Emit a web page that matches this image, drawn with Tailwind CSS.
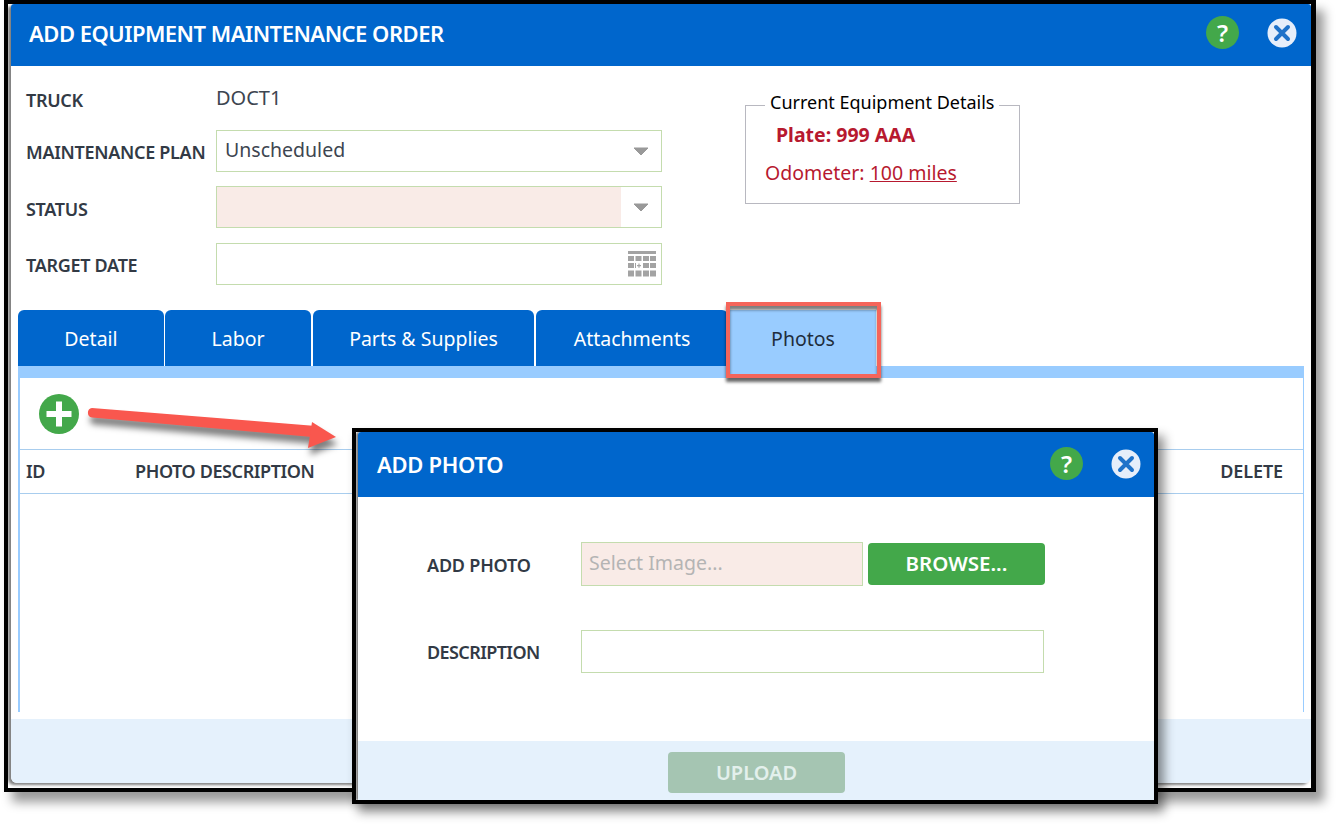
<!DOCTYPE html>
<html lang="en">
<head>
  <meta charset="UTF-8" />
  <title>Add Equipment Maintenance Order</title>
  <script src="https://cdn.jsdelivr.net/npm/@tailwindcss/browser@4"></script>
</head>
<body class="bg-white">
<div class="relative w-[1336px] h-[824px] overflow-hidden bg-white font-['Noto_Sans',sans-serif] text-[#323a45]">

  <!-- main window -->
  <div class="ml-[4px] w-[1312px] h-[792px] border-y-[4px] border-l-[4px] border-r-[5px] border-black bg-white shadow-[8px_10px_10px_rgba(0,0,0,0.4)]">
    <div class="ml-[3px] h-[779px] flex flex-col bg-white rounded-b-md rounded-t-[3px] shadow-[-3px_2px_3px_rgba(0,0,0,0.5)]">

      <header class="h-[62px] shrink-0 bg-[#0066cc] rounded-t-[3px] flex items-center justify-between pl-[18px] pr-[14px] text-white">
        <h1 class="text-[22px] font-semibold tracking-[-0.5px] pb-[3px]">ADD EQUIPMENT MAINTENANCE ORDER</h1>
        <div class="flex items-center gap-[28px] pb-[5px]">
          <span class="w-[33px] h-[33px] rounded-full bg-[#43a84a] flex items-center justify-center text-[24px] font-semibold">?</span>
          <svg width="30" height="30" viewBox="0 0 30 30"><circle cx="15" cy="15" r="14.5" fill="#e6eefa"/><path d="M9 9L21 21M21 9L9 21" stroke="#1f72c9" stroke-width="4" stroke-linecap="round"/></svg>
        </div>
      </header>

      <!-- order form -->
      <div class="h-[244px] shrink-0 flex pl-[15px]">
        <div class="w-[636px] shrink-0 text-[18px] font-semibold tracking-[-0.3px]">
          <div class="h-[64px] flex items-center pt-[4px]">
            <span class="w-[190px]">TRUCK</span>
            <span class="text-[20px] font-normal text-[#3d4550] tracking-normal pb-[5px]">DOCT1</span>
          </div>
          <div class="flex items-center h-[42px]">
            <span class="w-[190px] pt-[2px]">MAINTENANCE PLAN</span>
            <div class="w-[446px] h-full border border-[#c4dcae] flex items-center justify-between pl-[8px] pr-[12px]">
              <span class="text-[19.5px] font-normal tracking-normal text-[#3d4550] pb-[2px]">Unscheduled</span>
              <svg width="16" height="9" viewBox="0 0 16 9"><path d="M1 1H15L8 8Z" fill="#999" stroke="#999" stroke-linejoin="round"/></svg>
            </div>
          </div>
          <div class="flex items-center h-[42px] mt-[14px]">
            <span class="w-[190px] pt-[4px]">STATUS</span>
            <div class="w-[446px] h-full border border-[#c4dcae] flex items-center justify-between pr-[12px]">
              <div class="w-[404px] h-full bg-[#f9ebe7]"></div>
              <svg width="16" height="9" viewBox="0 0 16 9"><path d="M1 1H15L8 8Z" fill="#999" stroke="#999" stroke-linejoin="round"/></svg>
            </div>
          </div>
          <div class="flex items-center h-[42px] mt-[15px]">
            <span class="w-[190px] pt-[2px]">TARGET DATE</span>
            <div class="w-[446px] h-full border border-[#c4dcae] flex items-center justify-end pr-[5px]">
              <svg width="28" height="26" viewBox="0 0 28 26" fill="#a3a3a3">
                <rect x="0" y="0" width="28" height="3"/>
                <rect x="0" y="5" width="6" height="5"/><rect x="7.5" y="5" width="6" height="5"/><rect x="15" y="5" width="6" height="5"/><rect x="22" y="5" width="6" height="5"/>
                <rect x="0" y="12" width="6" height="5"/><rect x="22" y="12" width="6" height="5"/><rect x="15" y="12" width="6" height="5"/>
                <path d="M9 14H13V15.2H9ZM10.4 12.5H11.6V16.7H10.4Z"/><rect x="7" y="12" width="1" height="5"/>
                <rect x="0" y="19.5" width="6" height="6"/><rect x="7.5" y="19.5" width="6" height="6"/><rect x="15" y="19.5" width="6" height="6"/><rect x="22" y="19.5" width="6" height="6"/>
              </svg>
            </div>
          </div>
        </div>

        <fieldset class="ml-[83px] w-[275px] h-[112px] mt-[26px] border border-[#b8b8c0] pl-[19px] text-[#b7192f] text-[19.5px]">
          <legend class="px-[5px] pb-[6px] text-[18px] text-black leading-[20px]">Current Equipment Details</legend>
          <p class="pl-[11px] mt-[4px] font-bold leading-[26px]">Plate: 999 AAA</p>
          <p class="mt-[12px] leading-[26px]">Odometer: <a class="underline">100 miles</a></p>
        </fieldset>
      </div>

      <!-- tabs -->
      <nav class="h-[56px] shrink-0 flex pl-[7px] text-[19.5px] text-white">
        <div class="w-[146px] rounded-t-md bg-[#0066cc] flex items-center justify-center pt-[1px]">Detail</div>
        <div class="w-[146px] ml-[1px] rounded-t-md bg-[#0066cc] flex items-center justify-center pt-[1px]">Labor</div>
        <div class="w-[221px] ml-[2px] rounded-t-md bg-[#0066cc] flex items-center justify-center pt-[1px]">Parts &amp; Supplies</div>
        <div class="w-[192px] ml-[2px] rounded-t-md bg-[#0066cc] flex items-center justify-center pt-[1px]">Attachments</div>
        <div class="w-[146px] ml-[2px] bg-[#99ccff] text-[#1f2d3d] flex items-center justify-center pt-[1px]">Photos</div>
      </nav>

      <!-- photos table -->
      <div class="mx-[7px] h-[346px] shrink-0 border-t-[12px] border-x-2 border-[#99ccff] border-r border-l-2">
        <div class="h-[71px] flex items-center pl-[19px]">
          <svg width="40" height="40" viewBox="0 0 40 40"><circle cx="20" cy="20" r="20" fill="#43a84a"/><path d="M20 7.5V32.5M7.5 20H32.5" stroke="white" stroke-width="6"/></svg>
        </div>
        <div class="h-[45px] border-y border-[#a8cdee] flex items-center justify-between font-semibold text-[18px] tracking-[-0.4px] pl-[6px] pr-[20px]">
          <div class="flex"><span class="w-[109px]">ID</span><span>PHOTO DESCRIPTION</span></div>
          <span class="tracking-[-0.1px]">DELETE</span>
        </div>
      </div>

      <div class="mt-[7px] flex-1 bg-[#e5f1fc] rounded-b-md"></div>
    </div>
  </div>

  <!-- red highlight round the Photos tab -->
  <div class="absolute left-[726px] top-[302px] w-[155px] h-[76px] border-[4px] border-[#f5655a] shadow-[0_4px_3px_rgba(0,0,0,0.6),inset_0_4px_3px_rgba(0,0,0,0.5)]"></div>

  <!-- red arrow -->
  <svg class="absolute left-[80px] top-[400px] drop-shadow-[2px_7px_3px_rgba(0,0,0,0.5)]" width="270" height="60" viewBox="0 0 270 60">
    <path d="M12 8L236 26L232 37L12 17.5A4.8 4.8 0 0 1 12 8Z" fill="#f9574e"/>
    <path d="M232 22L256 37L228 48Z" fill="#f9574e"/>
  </svg>

  <!-- add photo dialog -->
  <div class="absolute left-[352px] top-[428px] w-[806px] h-[376px] border-y-[4px] border-x-[4px] border-black bg-white shadow-[6px_8px_10px_rgba(0,0,0,0.45)]">
    <div class="ml-[2px] h-full flex flex-col bg-white rounded-t-[3px] shadow-[-2px_0_2px_rgba(0,0,0,0.5)]">
      <header class="h-[65px] shrink-0 bg-[#0066cc] rounded-t-[3px] flex items-center justify-between pl-[19px] pr-[13px] text-white">
        <h2 class="text-[22px] font-semibold tracking-[-0.3px]">ADD PHOTO</h2>
        <div class="flex items-center gap-[28px] pb-[2px]">
          <span class="w-[33px] h-[33px] rounded-full bg-[#43a84a] flex items-center justify-center text-[24px] font-semibold">?</span>
          <svg width="30" height="30" viewBox="0 0 30 30"><circle cx="15" cy="15" r="14.5" fill="#e6eefa"/><path d="M9 9L21 21M21 9L9 21" stroke="#1f72c9" stroke-width="4" stroke-linecap="round"/></svg>
        </div>
      </header>

      <div class="flex-1 pl-[69px] text-[18px] font-semibold tracking-[-0.3px]">
        <div class="flex items-center h-[44px] mt-[45px]">
          <span class="w-[154px] pt-[2px] tracking-[-0.2px]">ADD PHOTO</span>
          <div class="w-[282px] h-full border border-[#c4dcae] bg-[#f9ebe7] flex items-center pl-[7px] pb-[3px] text-[19.5px] font-normal tracking-normal text-[#b4b4b4]">Select Image...</div>
          <div class="ml-[5px] w-[177px] h-[42px] rounded bg-[#43a84a] text-white text-[20.5px] font-semibold tracking-normal flex items-center justify-center pb-[2px]">BROWSE...</div>
        </div>
        <div class="flex items-center h-[43px] mt-[44px]">
          <span class="w-[154px] pt-[2px] tracking-[-0.6px]">DESCRIPTION</span>
          <div class="w-[463px] h-full border border-[#c4dcae]"></div>
        </div>
      </div>

      <div class="h-[59px] shrink-0 bg-[#e5f1fc] pt-[11px] pl-[310px]">
        <div class="w-[177px] h-[41px] rounded bg-[#a5c5b2] text-[#e3f0ec] text-[20px] font-semibold flex items-center justify-center">UPLOAD</div>
      </div>
    </div>
  </div>
</div>
</body>
</html>
